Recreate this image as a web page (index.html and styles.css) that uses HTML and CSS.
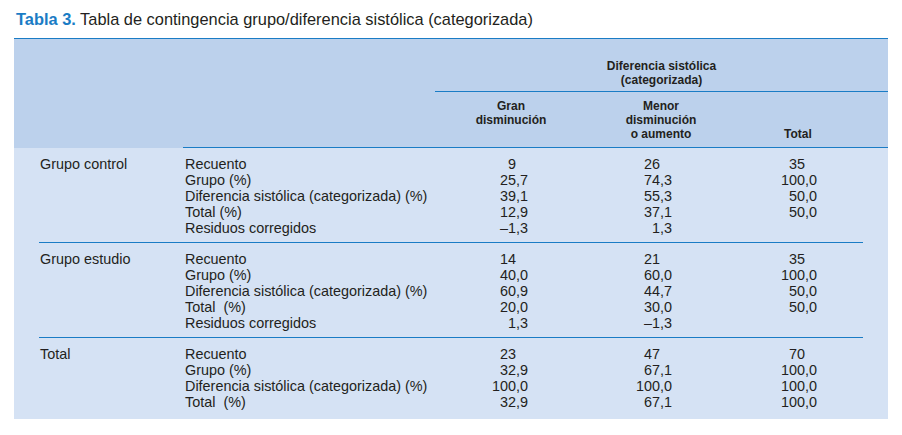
FILE: index.html
```html
<!DOCTYPE html>
<html lang="es">
<head>
<meta charset="utf-8">
<title>Tabla 3</title>
<link rel="stylesheet" href="styles.css">
</head>
<body>
<div class="page">
  <p class="caption"><span class="cap-num">Tabla 3.</span> Tabla de contingencia grupo/diferencia sistólica (categorizada)</p>
  <div class="tbl">
    <div class="thead">
      <div class="h-empty-top"></div>
      <div class="h-span">Diferencia sistólica<br>(categorizada)</div>
      <div class="h-blank"></div>
      <div class="h-cell h-line"></div>
      <div class="h-cell h-line">Gran<br>disminución</div>
      <div class="h-cell h-line">Menor<br>disminución<br>o aumento</div>
      <div class="h-cell h-line h-total">Total</div>
    </div>
    <div class="tbody">
      <div class="group">
        <div class="glabel">Grupo control</div>
        <div class="rlabels">
          <div>Recuento</div>
          <div>Grupo (%)</div>
          <div>Diferencia sistólica (categorizada) (%)</div>
          <div>Total (%)</div>
          <div>Residuos corregidos</div>
        </div>
        <div class="num c3">
          <div>9<span class="ph">,0</span></div>
          <div>25,7</div>
          <div>39,1</div>
          <div>12,9</div>
          <div>–1,3</div>
        </div>
        <div class="num c4">
          <div>26<span class="ph">,0</span></div>
          <div>74,3</div>
          <div>55,3</div>
          <div>37,1</div>
          <div>1,3</div>
        </div>
        <div class="num c5">
          <div>35<span class="ph">,0</span></div>
          <div>100,0</div>
          <div>50,0</div>
          <div>50,0</div>
          <div>&nbsp;</div>
        </div>
      </div>
      <div class="sep"></div>
      <div class="group">
        <div class="glabel">Grupo estudio</div>
        <div class="rlabels">
          <div>Recuento</div>
          <div>Grupo (%)</div>
          <div>Diferencia sistólica (categorizada) (%)</div>
          <div>Total&nbsp; (%)</div>
          <div>Residuos corregidos</div>
        </div>
        <div class="num c3">
          <div>14<span class="ph">,0</span></div>
          <div>40,0</div>
          <div>60,9</div>
          <div>20,0</div>
          <div>1,3</div>
        </div>
        <div class="num c4">
          <div>21<span class="ph">,0</span></div>
          <div>60,0</div>
          <div>44,7</div>
          <div>30,0</div>
          <div>–1,3</div>
        </div>
        <div class="num c5">
          <div>35<span class="ph">,0</span></div>
          <div>100,0</div>
          <div>50,0</div>
          <div>50,0</div>
          <div>&nbsp;</div>
        </div>
      </div>
      <div class="sep"></div>
      <div class="group last">
        <div class="glabel">Total</div>
        <div class="rlabels">
          <div>Recuento</div>
          <div>Grupo (%)</div>
          <div>Diferencia sistólica (categorizada) (%)</div>
          <div>Total&nbsp; (%)</div>
        </div>
        <div class="num c3">
          <div>23<span class="ph">,0</span></div>
          <div>32,9</div>
          <div>100,0</div>
          <div>32,9</div>
        </div>
        <div class="num c4">
          <div>47<span class="ph">,0</span></div>
          <div>67,1</div>
          <div>100,0</div>
          <div>67,1</div>
        </div>
        <div class="num c5">
          <div>70<span class="ph">,0</span></div>
          <div>100,0</div>
          <div>100,0</div>
          <div>100,0</div>
        </div>
      </div>
    </div>
  </div>
</div>
</body>
</html>
```
FILE: styles.css
```css
* { box-sizing: border-box; }
body {
  margin: 0;
  background: #ffffff;
  font-family: "Liberation Sans", Arial, sans-serif;
  color: #231f20;
}
.page {
  padding: 9px 14px 0 14px;
}
.caption {
  margin: 0 0 0 2px;
  height: 29px;
  font-size: 16.4px;
  line-height: 20px;
  color: #231f20;
}
.cap-num {
  color: #1a7cc5;
  font-weight: bold;
}
.tbl {
  border-top: 1px solid #1a7cc5;
}
.thead {
  display: grid;
  grid-template-columns: 169px 252px 152px 148px 153px;
  background: #bcd1ec;
  font-size: 12px;
  line-height: 14px;
  font-weight: bold;
  text-align: center;
}
.h-empty-top {
  grid-column: 1 / 3;
}
.h-span {
  grid-column: 3 / 6;
  padding: 19.5px 0 4.5px;
  border-bottom: 1px solid #1a7cc5;
}
.h-blank {
  border-bottom: 1px solid transparent;
}
.h-cell {
  padding: 7px 0 6px;
  min-height: 56px;
}
.h-line {
  border-bottom: 1px solid #1a7cc5;
}
.h-total {
  display: flex;
  align-items: flex-end;
  text-align: left;
  padding-left: 49px;
}
.tbody {
  background: #d5e2f4;
}
.group {
  display: grid;
  grid-template-columns: 169px 252px 152px 148px 153px;
  padding: 7.5px 0 5.5px;
  font-size: 14.4px;
  line-height: 16.2px;
}
.group.last {
  padding-bottom: 9px;
}
.glabel {
  padding-left: 26px;
}
.rlabels {
  padding-left: 2px;
  white-space: nowrap;
}
.num {
  text-align: right;
}
.c3 { padding-right: 59px; }
.c4 { padding-right: 63px; }
.c5 { padding-right: 71px; }
.ph {
  visibility: hidden;
}
.sep {
  height: 1px;
  background: #1a7cc5;
  margin: 0 25px;
}
```
